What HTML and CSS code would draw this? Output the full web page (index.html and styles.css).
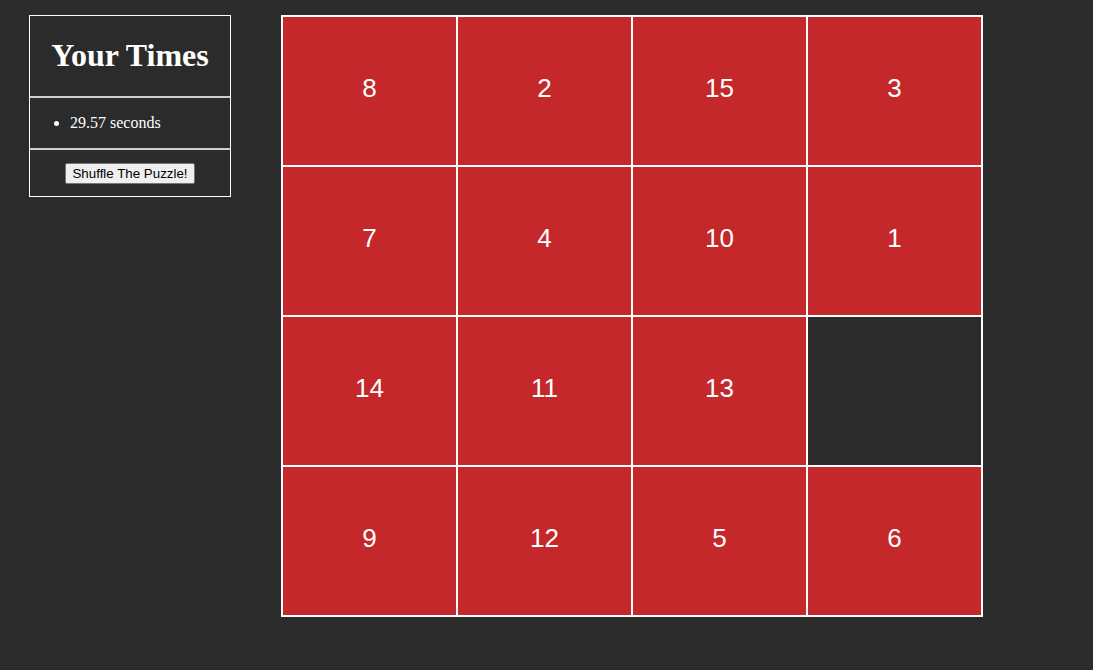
FILE: index.html
```html
<!DOCTYPE html>
<html lang="en">
<head>
<meta charset="utf-8">
<title>15 Puzzle</title>
<link rel="stylesheet" href="styles.css">
</head>
<body>
<div class="page">
  <aside class="panel">
    <div class="panel-head">
      <h1 class="title">Your Times</h1>
    </div>
    <div class="panel-times">
      <ul class="times">
        <li>29.57 seconds</li>
      </ul>
    </div>
    <div class="panel-actions">
      <button class="shuffle" type="button">Shuffle The Puzzle!</button>
    </div>
  </aside>
  <main class="board">
    <div class="tile"><span class="num">8</span></div>
    <div class="tile"><span class="num">2</span></div>
    <div class="tile"><span class="num">15</span></div>
    <div class="tile"><span class="num">3</span></div>
    <div class="tile"><span class="num">7</span></div>
    <div class="tile"><span class="num">4</span></div>
    <div class="tile"><span class="num">10</span></div>
    <div class="tile"><span class="num">1</span></div>
    <div class="tile"><span class="num">14</span></div>
    <div class="tile"><span class="num">11</span></div>
    <div class="tile"><span class="num">13</span></div>
    <div class="tile tile-empty"></div>
    <div class="tile"><span class="num">9</span></div>
    <div class="tile"><span class="num">12</span></div>
    <div class="tile"><span class="num">5</span></div>
    <div class="tile"><span class="num">6</span></div>
  </main>
</div>
</body>
</html>
```
FILE: styles.css
```css
html, body {
  margin: 0;
  padding: 0;
  background: #2b2b2b;
  color: #ffffff;
  font-family: "Liberation Serif", "Times New Roman", serif;
}

.page {
  display: flex;
  align-items: flex-start;
  gap: 50px;
  padding: 15px 0 0 29px;
}

.panel {
  width: 200px;
  border: 1px solid #ffffff;
}

.panel-head {
  border-bottom: 2px solid #cfcfcf;
}

.title {
  margin: 21px 0 22px;
  font-size: 32px;
  line-height: 37px;
  font-weight: bold;
  text-align: center;
}

.panel-times {
  border-bottom: 2px solid #cfcfcf;
}

.times {
  margin: 16px 0;
  padding-left: 40px;
  font-size: 16px;
  line-height: 18px;
}

.panel-actions {
  display: flex;
  justify-content: center;
  padding: 13px 0 12px;
}

.shuffle {
  font-family: "Liberation Sans", Arial, sans-serif;
  font-size: 13.333px;
  line-height: 17px;
  padding: 1px 6px;
  color: #000000;
  background: #efefef;
  border: 1px solid #767676;
  border-radius: 2px;
}

.board {
  display: grid;
  grid-template-columns: repeat(4, 175px);
  grid-template-rows: repeat(4, 150px);
  border: 1px solid #ffffff;
}

.tile {
  box-sizing: border-box;
  border: 1px solid #ffffff;
  background: #c4282a;
  display: flex;
  align-items: center;
  justify-content: center;
  padding-bottom: 6px;
}

.tile-empty {
  background: #2b2b2b;
}

.num {
  font-family: "Liberation Sans", Arial, sans-serif;
  font-size: 26px;
  color: #ffffff;
}
```
